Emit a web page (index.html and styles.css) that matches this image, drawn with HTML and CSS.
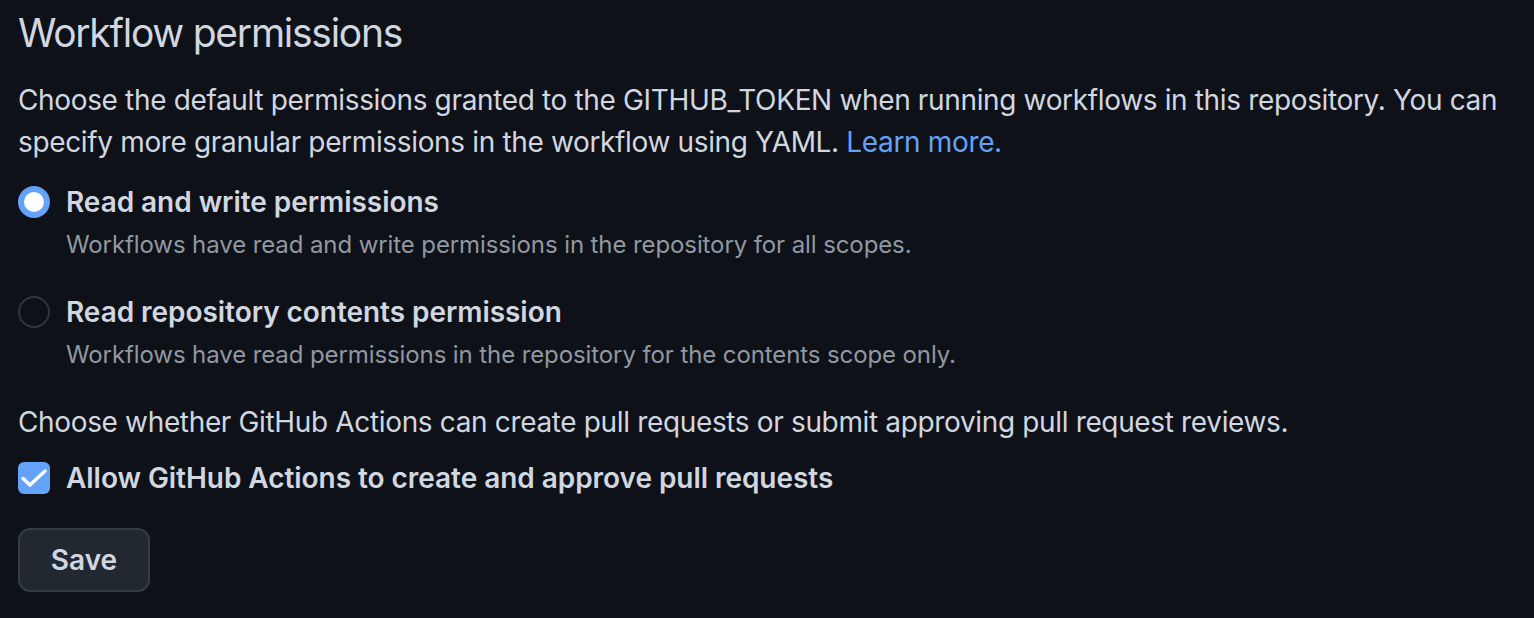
FILE: index.html
```html
<!DOCTYPE html>
<html lang="en">
<head>
<meta charset="utf-8">
<title>Workflow permissions</title>
<link rel="stylesheet" href="styles.css">
</head>
<body>
<main class="page">
  <h2 class="subhead">Workflow permissions</h2>
  <p class="intro">Choose the default permissions granted to the GITHUB_TOKEN when running workflows in this repository. You can specify more granular permissions in the workflow using YAML. <a class="link" href="#">Learn more.</a></p>

  <div class="option option-first">
    <div class="option-row">
      <span class="radio radio-checked"></span>
      <span class="option-label">Read and write permissions</span>
    </div>
    <div class="option-note">Workflows have read and write permissions in the repository for all scopes.</div>
  </div>

  <div class="option">
    <div class="option-row">
      <span class="radio"></span>
      <span class="option-label">Read repository contents permission</span>
    </div>
    <div class="option-note">Workflows have read permissions in the repository for the contents scope only.</div>
  </div>

  <p class="choose">Choose whether GitHub Actions can create pull requests or submit approving pull request reviews.</p>

  <div class="option-row check-row">
    <span class="checkbox">
      <svg viewBox="0 0 32 32" width="32" height="32" aria-hidden="true"><polyline points="5,16.5 12,23 27,9" fill="none" stroke="#ffffff" stroke-width="3.4" stroke-linecap="round" stroke-linejoin="round"/></svg>
    </span>
    <span class="option-label">Allow GitHub Actions to create and approve pull requests</span>
  </div>

  <button class="btn" type="button">Save</button>
</main>
</body>
</html>
```

FILE: styles.css
```css
html, body {
  margin: 0;
  padding: 0;
  background: #0e1117;
}

.page {
  padding: 8px 18px 0 18px;
  font-family: Inter, "Noto Sans", "Liberation Sans", sans-serif;
  color: #d1d7e0;
}

.subhead {
  margin: 0;
  font-size: 39px;
  line-height: 50px;
  font-weight: 400;
  color: #d1d7e0;
  letter-spacing: -1.25px;
}

.intro {
  margin: 21px 0 0 0;
  font-size: 28px;
  line-height: 42px;
  color: #d1d7e0;
  letter-spacing: -0.35px;
}

.link {
  color: #64a2f8;
  text-decoration: none;
}

.option-first {
  margin-top: 18px;
}

.option + .option {
  margin-top: 28px;
}

.option-row {
  display: flex;
  align-items: center;
  gap: 16px;
}

.option-label {
  font-size: 28px;
  line-height: 42px;
  font-weight: 600;
  color: #d1d7e0;
  letter-spacing: -0.05px;
}

.option-note {
  margin-top: 4px;
  padding-left: 48px;
  font-size: 24px;
  line-height: 36px;
  color: #9198a1;
  letter-spacing: -0.1px;
}

.radio {
  box-sizing: border-box;
  width: 32px;
  height: 32px;
  border-radius: 50%;
  border: 2px solid #30363d;
  background: transparent;
  flex: none;
}

.radio-checked {
  border: 6px solid #64a2f8;
  background: #ffffff;
}

.choose {
  margin: 28px 0 0 0;
  font-size: 28px;
  line-height: 42px;
  color: #d1d7e0;
  letter-spacing: -0.35px;
}

.check-row {
  margin-top: 14px;
}

.checkbox {
  width: 32px;
  height: 32px;
  border-radius: 6px;
  background: #64a2f8;
  flex: none;
  display: flex;
}

.btn {
  display: block;
  margin-top: 29px;
  box-sizing: border-box;
  height: 64px;
  width: 132px;
  border: 2px solid #363c44;
  border-radius: 12px;
  background: #212830;
  color: #d1d7e0;
  font-family: Inter, "Noto Sans", "Liberation Sans", sans-serif;
  font-size: 28px;
  font-weight: 600;
  padding: 0;
}
```
